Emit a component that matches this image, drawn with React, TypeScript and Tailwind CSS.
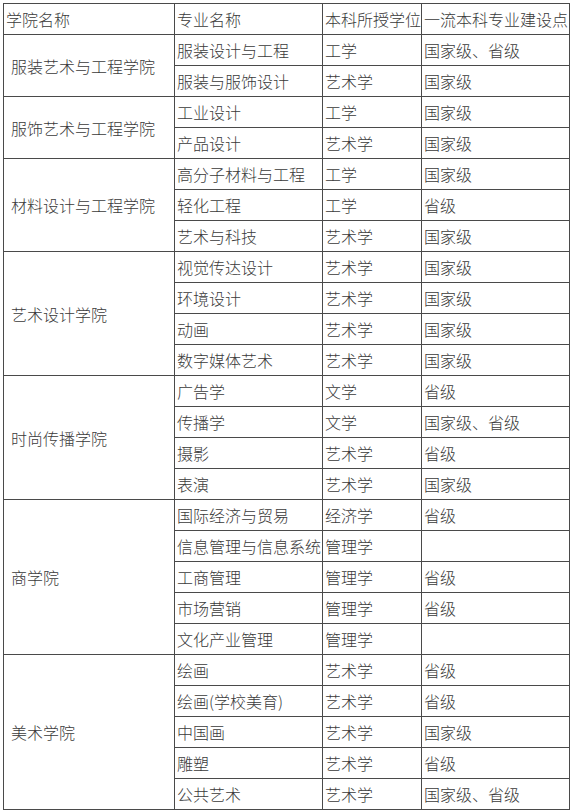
const groups: { college: string; rows: [string, string, string][] }[] = [
  {
    college: "服装艺术与工程学院",
    rows: [
      ["服装设计与工程", "工学", "国家级、省级"],
      ["服装与服饰设计", "艺术学", "国家级"],
    ],
  },
  {
    college: "服饰艺术与工程学院",
    rows: [
      ["工业设计", "工学", "国家级"],
      ["产品设计", "艺术学", "国家级"],
    ],
  },
  {
    college: "材料设计与工程学院",
    rows: [
      ["高分子材料与工程", "工学", "国家级"],
      ["轻化工程", "工学", "省级"],
      ["艺术与科技", "艺术学", "国家级"],
    ],
  },
  {
    college: "艺术设计学院",
    rows: [
      ["视觉传达设计", "艺术学", "国家级"],
      ["环境设计", "艺术学", "国家级"],
      ["动画", "艺术学", "国家级"],
      ["数字媒体艺术", "艺术学", "国家级"],
    ],
  },
  {
    college: "时尚传播学院",
    rows: [
      ["广告学", "文学", "省级"],
      ["传播学", "文学", "国家级、省级"],
      ["摄影", "艺术学", "省级"],
      ["表演", "艺术学", "国家级"],
    ],
  },
  {
    college: "商学院",
    rows: [
      ["国际经济与贸易", "经济学", "省级"],
      ["信息管理与信息系统", "管理学", ""],
      ["工商管理", "管理学", "省级"],
      ["市场营销", "管理学", "省级"],
      ["文化产业管理", "管理学", ""],
    ],
  },
  {
    college: "美术学院",
    rows: [
      ["绘画", "艺术学", "省级"],
      ["绘画(学校美育)", "艺术学", "省级"],
      ["中国画", "艺术学", "国家级"],
      ["雕塑", "艺术学", "省级"],
      ["公共艺术", "艺术学", "国家级、省级"],
    ],
  },
];

const cell = "border border-[#4a4a4a] h-[31px] p-0 pl-[2px] align-middle whitespace-nowrap";

export default function App() {
  return (
    <div
      className="bg-white w-[570px] h-[811px] pt-[3px] pl-[3px] text-[#3a3a3a] text-[16px] leading-[20px] font-light"
      style={{ fontFamily: '"Microsoft YaHei", "Noto Sans CJK SC", sans-serif' }}
    >
      <table className="table-fixed border-collapse w-[566px]">
        <colgroup>
          <col className="w-[171px]" />
          <col className="w-[148px]" />
          <col className="w-[99px]" />
          <col className="w-[148px]" />
        </colgroup>
        <thead>
          <tr>
            <th className={`${cell} font-light text-left`}>学院名称</th>
            <th className={`${cell} font-light text-left`}>专业名称</th>
            <th className={`${cell} font-light text-left`}>本科所授学位</th>
            <th className={`${cell} font-light text-left`}>一流本科专业建设点</th>
          </tr>
        </thead>
        <tbody>
          {groups.map((g) =>
            g.rows.map((r, i) => (
              <tr key={g.college + r[0]}>
                {i === 0 && (
                  <td rowSpan={g.rows.length} className={`${cell} pl-[7px]`}>
                    {g.college}
                  </td>
                )}
                <td className={cell}>{r[0]}</td>
                <td className={cell}>{r[1]}</td>
                <td className={cell}>{r[2]}</td>
              </tr>
            ))
          )}
        </tbody>
      </table>
    </div>
  );
}
